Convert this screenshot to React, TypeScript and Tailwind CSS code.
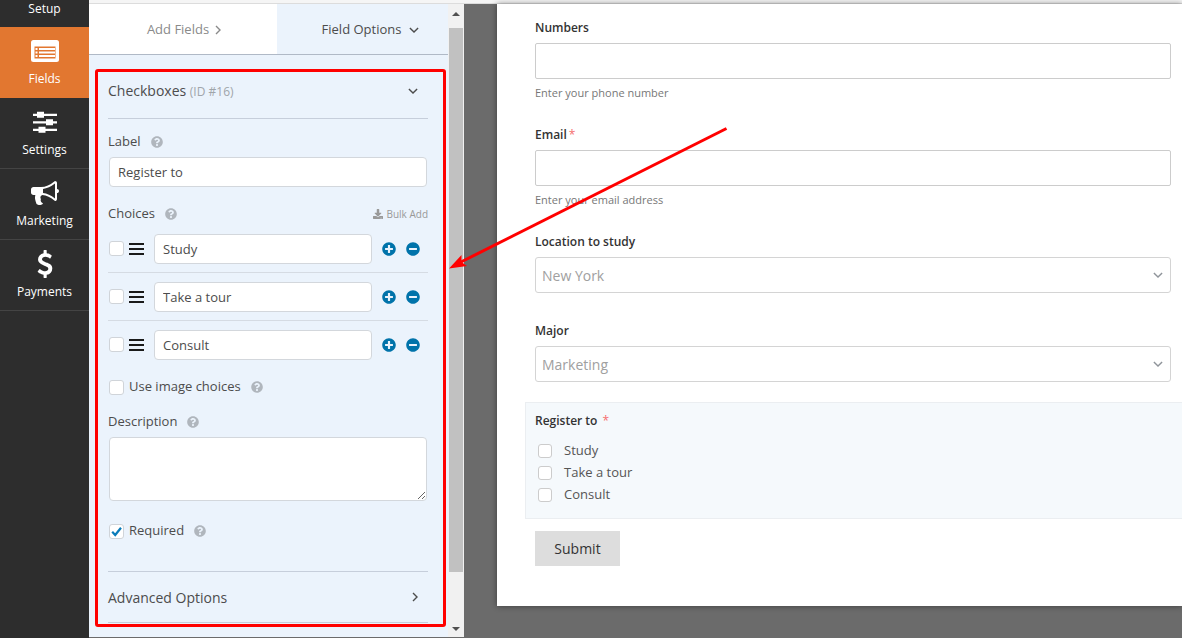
import type { ReactNode } from 'react';
import { FaDownload, FaMinusCircle, FaPlusCircle, FaQuestionCircle } from 'react-icons/fa';

const choices = ['Study', 'Take a tour', 'Consult'];

function Chevron({ dir = 'down', className = '' }: { dir?: 'down' | 'right'; className?: string }) {
    return (
        <svg viewBox="0 0 10 10" className={`w-[10px] h-[10px] shrink-0 ${className}`} fill="none" stroke="currentColor" strokeWidth="1.4">
            <path d={dir === 'down' ? 'M0.9 2.9 L5 7 L9.1 2.9' : 'M3 1 L7 5 L3 9'} />
        </svg>
    );
}

function FieldsIcon() {
    return (
        <svg viewBox="0 0 28 22" className="w-7 h-[22px]">
            <rect width="28" height="22" rx="2.5" fill="#fff" />
            <path d="M3.5 6.5h21v12h-21z" fill="#e27730" />
            <path d="M4.5 8h2v2h-2zM8 8h16v2H8zM4.5 11.5h2v2h-2zM8 11.5h16v2H8zM4.5 15h2v2h-2zM8 15h16v2H8z" fill="#fff" />
        </svg>
    );
}

function SettingsIcon() {
    return (
        <svg viewBox="0 0 26 22" className="w-[26px] h-[22px]" fill="currentColor">
            <path d="M1 2.7h24v2.2H1zM1 10.2h24v2.2H1zM1 17.7h24v2.2H1z" />
            <path d="M5 .8h7v6H5zM14 8.3h7v6h-7zM6.5 15.8h7v6h-7z" />
        </svg>
    );
}

function MarketingIcon() {
    return (
        <svg viewBox="0 0 1792 1792" className="w-7 h-7" fill="currentColor">
            <path d="M1664 640q53 0 90.5 37.5t37.5 90.5-37.5 90.5-90.5 37.5v384q0 52-38 90t-90 38q-417-347-812-380-58 19-91 66t-31 100.5 40 92.5q-20 33-23 65.5t6 58 33.5 55 48 50 61.5 50.5q-29 58-111.5 83t-168.5 11.5-132-55.5q-7-23-29.5-87.5t-32-94.5-23-89-15-101 3.5-98.5 22-110.5h-122q-66 0-113-47t-47-113v-192q0-66 47-113t113-47h480q435 0 896-384 52 0 90 38t38 90v384zm-128 604v-954q-394 302-768 343v270q377 42 768 341z" />
        </svg>
    );
}

function PaymentsIcon() {
    return (
        <svg viewBox="0 0 1792 1792" className="w-7 h-7" fill="currentColor">
            <path d="M1362 1185q0 153-99.5 263.5t-258.5 136.5v175q0 14-9 23t-23 9h-135q-13 0-22.5-9.5t-9.5-22.5v-175q-66-9-127.5-31t-101.5-44.5-74-48-46.5-37.5-17.5-18q-17-21-2-41l103-135q7-10 23-12 15-2 24 9l2 2q113 99 243 125 37 8 74 8 81 0 142.5-43t61.5-122q0-28-15-53t-33.5-42-58.5-37.5-66-32-80-32.5q-39-16-61.5-25t-61.5-26.5-62.5-31-56.5-35.5-53.5-42.5-43.5-49-35.5-58-21-66.5-8.5-78q0-138 98-242t255-134v-180q0-13 9.5-22.5t22.5-9.5h135q14 0 23 9t9 23v176q57 6 110.5 23t87 33.5 63.5 37.5 39 29 15 14q17 18 5 38l-81 146q-8 15-23 16-14 3-27-7-3-3-14.5-12t-39-26.5-58.5-32-74.5-26-85.5-11.5q-95 0-155 43t-60 111q0 26 8.5 48t29.5 41.5 39.5 33 56 31 60.5 27 70 27.5q53 20 81 31.5t76 35 75.5 42.5 62 50 53 63.5 31.5 76.5 13 94z" />
        </svg>
    );
}

function NavItem({ label, icon, active = false }: { label: string; icon: ReactNode; active?: boolean }) {
    return (
        <a
            href="#"
            className={`h-[71px] shrink-0 flex flex-col items-center justify-end pb-2 border-b ${active ? 'bg-[#e27730] border-[#e27730]' : 'border-[#444444]'}`}
        >
            <span className="h-7 flex items-center justify-center">{icon}</span>
            <span className="mt-1 text-[12px] leading-5">{label}</span>
        </a>
    );
}

function Help() {
    return (
        <button type="button" aria-label="Help" className="ml-[10px] text-[#b0b6bd]">
            <FaQuestionCircle className="w-3 h-3" />
        </button>
    );
}

function Checkbox({ id, label, checked = false }: { id: string; label?: string; checked?: boolean }) {
    return (
        <span className="relative w-[15px] h-[15px] shrink-0">
            <input
                id={id}
                type="checkbox"
                aria-label={label}
                defaultChecked={checked}
                className="peer block appearance-none w-[15px] h-[15px] rounded-[3px] border border-[#d0d4d9] bg-white"
            />
            <svg viewBox="0 0 15 15" className="absolute inset-0 hidden peer-checked:block pointer-events-none" fill="none" stroke="#0a7cba" strokeWidth="2.2">
                <path d="M3.2 7.8 L6.2 11 L12 3.8" />
            </svg>
        </span>
    );
}

function FieldPanel() {
    return (
        <section className="w-[359px] shrink-0 bg-[#ebf3fc] text-[#4c4c4c] text-[13px]">
            <div className="flex h-[51px] border-b border-[#b0b9c6]">
                <button type="button" className="w-[188px] pt-0.5 pl-1 bg-white text-[#8a8a8a] flex items-center justify-center gap-1">
                    Add Fields <Chevron dir="right" />
                </button>
                <button type="button" className="flex-1 pt-0.5 flex items-center justify-center gap-2 pl-4">
                    Field Options <Chevron />
                </button>
            </div>

            <div className="pl-[19px] pr-5">
                <button type="button" className="mt-2 w-full h-14 flex items-center justify-between border-b border-[#c6cedb] pr-[10px]">
                    <span className="text-[14px]">
                        Checkboxes <span className="text-[12px] text-[#a0a5aa]">(ID #16)</span>
                    </span>
                    <Chevron />
                </button>

                <div className="mt-[13px] h-5 flex items-center">
                    <label htmlFor="field-label">Label</label>
                    <Help />
                </div>
                <div className="mt-[5px] px-px">
                    <input
                        id="field-label"
                        defaultValue="Register to"
                        className="block w-full h-[30px] px-2 rounded-[4px] border border-[#d3d7dc] bg-white"
                    />
                </div>

                <div className="mt-[17px] h-5 flex items-center">
                    <span>Choices</span>
                    <Help />
                    <button type="button" className="ml-auto flex items-center gap-[3px] text-[10px] text-[#999999]">
                        <FaDownload className="w-[10px] h-[10px]" /> Bulk Add
                    </button>
                </div>
                <ul className="mt-px">
                    {choices.map((choice) => (
                        <li key={choice} className="h-12 pl-px flex items-center border-b border-[#d5dbe3] last:border-transparent">
                            <Checkbox id={`default-${choice}`} label={`Select ${choice} by default`} />
                            <svg viewBox="0 0 15 12" className="ml-[5px] w-[15px] h-3 shrink-0" fill="#1a1a1a">
                                <path d="M0 0h15v2H0zM0 5h15v2H0zM0 10h15v2H0z" />
                            </svg>
                            <input
                                defaultValue={choice}
                                aria-label="Choice label"
                                className="ml-[10px] min-w-0 flex-1 h-[30px] px-2 rounded-[4px] border border-[#d3d7dc] bg-white"
                            />
                            <button type="button" aria-label="Add choice" className="ml-[10px] text-[#0073aa]">
                                <FaPlusCircle className="w-[14px] h-[14px]" />
                            </button>
                            <button type="button" aria-label="Remove choice" className="ml-[10px] mr-2 text-[#0073aa]">
                                <FaMinusCircle className="w-[14px] h-[14px]" />
                            </button>
                        </li>
                    ))}
                </ul>

                <div className="mt-2 h-5 pl-px flex items-center">
                    <Checkbox id="image-choices" />
                    <label htmlFor="image-choices" className="ml-[5px]">Use image choices</label>
                    <Help />
                </div>

                <div className="mt-[15px] h-5 flex items-center">
                    <label htmlFor="description">Description</label>
                    <Help />
                </div>
                <div className="mt-[5px] px-px">
                    <textarea id="description" className="block w-full h-16 rounded-[4px] border border-[#d3d7dc] bg-white" />
                </div>

                <div className="mt-5 h-5 pl-px flex items-center">
                    <Checkbox id="required" checked />
                    <label htmlFor="required" className="ml-[5px]">Required</label>
                    <Help />
                </div>

                <button type="button" className="mt-[30px] w-full h-[52px] flex items-center justify-between border-y border-[#c6cedb] pr-2 text-[14px]">
                    Advanced Options <Chevron dir="right" />
                </button>
            </div>
        </section>
    );
}

function Scrollbar() {
    return (
        <div className="w-4 shrink-0 bg-[#f1f1f1] flex flex-col items-center">
            <svg viewBox="0 0 8 4" className="mt-2 w-2 h-1 shrink-0" fill="#505050"><path d="M0 4 L4 0 L8 4z" /></svg>
            <div className="mt-3 w-[14px] h-[86%] bg-[#c1c1c1]" />
            <svg viewBox="0 0 8 4" className="mt-auto mb-[6px] w-2 h-1 shrink-0" fill="#505050"><path d="M0 0 L4 4 L8 0z" /></svg>
        </div>
    );
}

function TextField({ id, label, hint, required = false }: { id: string; label: string; hint: string; required?: boolean }) {
    return (
        <div className="pl-[10px] pr-[11px] mb-[22px]">
            <label htmlFor={id} className="block h-5 mb-[5px] leading-5 font-semibold">
                {label}
                {required && <span className="ml-0.5 font-normal text-[#f56e6e]">*</span>}
            </label>
            <input id={id} className="block w-full h-9 px-2 rounded-[2px] border border-[#cccccc] bg-white" />
            <p className="mt-1 leading-5 text-[11px] text-[#777777]">{hint}</p>
        </div>
    );
}

function SelectField({ id, label, value, className }: { id: string; label: string; value: string; className: string }) {
    return (
        <div className={`pl-[10px] pr-[11px] ${className}`}>
            <label htmlFor={id} className="block h-5 mb-[5px] leading-5 font-semibold">{label}</label>
            <div className="relative">
                <select id={id} className="block appearance-none w-full h-9 px-1.5 rounded-[3px] border border-[#d4d4d4] bg-white text-[14px] text-[#a0a0a0]">
                    <option>{value}</option>
                </select>
                <Chevron className="absolute right-2 top-[13px] text-[#8f949a] pointer-events-none" />
            </div>
        </div>
    );
}

function FormPreview() {
    return (
        <main className="flex-1 min-w-0 bg-[#6b6b6b] pl-[33px]">
            <form className="bg-white pl-7 pt-[14px] pb-10 text-[12px] text-[#333333] shadow-[0_0_6px_rgba(0,0,0,0.45)]">
                <TextField id="numbers" label="Numbers" hint="Enter your phone number" />
                <TextField id="email" label="Email" hint="Enter your email address" required />
                <SelectField id="location" label="Location to study" value="New York" className="mb-7" />
                <SelectField id="major" label="Major" value="Marketing" className="mb-5" />

                <fieldset className="border border-r-0 border-[#ebeef1] bg-[#f5f9fc] pl-[9px] pt-2 pb-3">
                    <div className="h-5 mb-[9px] leading-5 font-semibold">
                        Register to <span className="ml-0.5 font-normal text-[#f56e6e]">*</span>
                    </div>
                    {choices.map((choice) => (
                        <div key={choice} className="h-[22px] ml-[3px] flex items-center">
                            <input
                                id={`preview-${choice}`}
                                type="checkbox"
                                className="appearance-none w-[14px] h-[14px] rounded-[3px] border border-[#cccccc] bg-white"
                            />
                            <label htmlFor={`preview-${choice}`} className="ml-3 text-[13px] text-[#555555]">{choice}</label>
                        </div>
                    ))}
                </fieldset>

                <button type="button" className="mt-3 ml-[10px] block h-[35px] w-[85px] bg-[#dddddd] text-[14px]">
                    Submit
                </button>
            </form>
        </main>
    );
}

export default function App() {
    return (
        <div className="relative h-screen flex overflow-hidden bg-[#6b6b6b] font-['Open_Sans',sans-serif]">
            <nav className="w-[89px] shrink-0 bg-[#2d2d2d] text-white flex flex-col">
                <a href="#" className="h-[27px] shrink-0 flex items-end justify-center pb-2 text-[12px] leading-5">Setup</a>
                <NavItem label="Fields" icon={<FieldsIcon />} active />
                <NavItem label="Settings" icon={<SettingsIcon />} />
                <NavItem label="Marketing" icon={<MarketingIcon />} />
                <NavItem label="Payments" icon={<PaymentsIcon />} />
            </nav>

            <div className="flex-1 min-w-0 flex flex-col border-b border-[#6b6b6b]">
                <div className="h-1 shrink-0 bg-[#f5f5f5] border-b border-[#dcdcdc]" />
                <div className="flex-1 min-h-0 flex">
                    <FieldPanel />
                    <Scrollbar />
                    <FormPreview />
                </div>
            </div>

            {/* callout frame and arrow over the field options */}
            <div className="absolute left-[95px] top-[69px] w-[351px] h-[558px] rounded-[3px] border-3 border-[#ff0000] pointer-events-none" />
            <svg viewBox="0 0 280 144" className="absolute left-[448px] top-[126px] w-[280px] h-36 pointer-events-none">
                <path d="M278.5 2.5 L13 136" stroke="#ff0000" strokeWidth="3" />
                <path d="M1 142.5 L13.5 129 L13.5 136 L19 140z" fill="#ff0000" />
            </svg>
        </div>
    );
}
